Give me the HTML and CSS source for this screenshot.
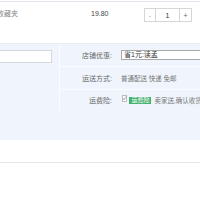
FILE: index.html
```html
<!DOCTYPE html>
<html lang="zh">
<head>
<meta charset="utf-8">
<link rel="stylesheet" href="styles.css">
</head>
<body>
<div class="item">
  <div class="fav">加入收藏夹</div>
  <div class="price">19.80</div>
  <div class="stepper"><span class="step minus">-</span><span class="step qty">1</span><span class="step plus">+</span></div>
</div>
<div class="order">
  <div class="order-main">
    <div class="memo"><div class="memo-input"></div></div>
    <div class="opts">
      <div class="row row-1"><span class="label">店铺优惠:</span><span class="sel">省1元:读孟</span></div>
      <div class="row row-2"><span class="label">运送方式:</span><span class="ship">普通配送 快递 免邮</span></div>
      <div class="row row-3"><span class="label">运费险:</span><span class="check">✓</span><span class="badge">运费险</span><span class="note">卖家送,确认收货前退货可赔</span></div>
    </div>
  </div>
</div>
<div class="sum"></div>
</body>
</html>
```
FILE: styles.css
```css
html, body {
  margin: 0;
  padding: 0;
  background: #fff;
  overflow: hidden;
}
body {
  padding-top: 1px;
  font-family: "Liberation Sans", "Noto Sans CJK SC", sans-serif;
  font-size: 7px;
  color: #666;
}
.item {
  border-top: 1px solid #e4e9f0;
  border-bottom: 1px solid #e8edf4;
  display: flex;
  align-items: flex-start;
  padding-top: 6px;
  height: 35px;
}
.fav {
  width: 108px;
  margin-left: -17px;
  line-height: 11px;
  color: #888;
  white-space: nowrap;
  overflow: hidden;
}
.price {
  width: 53px;
  line-height: 11px;
  color: #444;
}
.stepper {
  display: flex;
  height: 14px;
}
.step {
  box-sizing: border-box;
  height: 14px;
  border: 1px solid #d6d6d6;
  display: flex;
  align-items: center;
  justify-content: center;
  line-height: 1;
}
.minus { width: 12px; color: #aaa; }
.qty { width: 25px; margin-left: -1px; color: #333; }
.plus { width: 13px; margin-left: -1px; color: #666; }
.order {
  background: #f0f5fd;
  padding-bottom: 30px;
}
.order-main {
  display: flex;
}
.memo {
  width: 59px;
  border-right: 1px solid #fafcff;
  padding-top: 6px;
  overflow: hidden;
}
.memo-input {
  width: 60px;
  height: 13px;
  margin-left: -8px;
  box-sizing: border-box;
  background: #fff;
  border: 1px solid #d4d7dc;
}
.opts {
  flex: 1;
  display: flex;
  flex-direction: column;
  min-width: 0;
}
.row {
  display: flex;
  align-items: center;
  white-space: nowrap;
}
.row-1 { height: 22px; border-bottom: 1px solid #fafcff; }
.row-2 { height: 22px; border-bottom: 1px solid #fafcff; }
.row-3 { height: 20px; }
.label {
  width: 52px;
  flex: none;
  text-align: right;
  margin-right: 9px;
  color: #666;
}
.sel {
  flex: 1;
  height: 10px;
  box-sizing: border-box;
  background: #fff;
  border: 1px solid #a9a9a9;
  border-right: none;
  padding-left: 2px;
  line-height: 8px;
  color: #333;
}
.ship {
  font-size: 6.5px;
  color: #777;
}
.check {
  width: 5px;
  height: 5px;
  margin-left: 1px;
  margin-top: -4px;
  font-size: 5px;
  line-height: 5px;
  color: #555;
  background: #fff;
  border: 1px solid #bbb;
  display: flex;
  align-items: center;
  justify-content: center;
}
.badge {
  margin-left: 2px;
  background: #43b06e;
  color: #fff;
  font-size: 6px;
  line-height: 7px;
  height: 7px;
  padding: 0 2px;
}
.note {
  margin-left: 3px;
  font-size: 6.5px;
  color: #777;
}
.sum {
  height: 22px;
  border-bottom: 1px solid #e8e8e8;
}
```
